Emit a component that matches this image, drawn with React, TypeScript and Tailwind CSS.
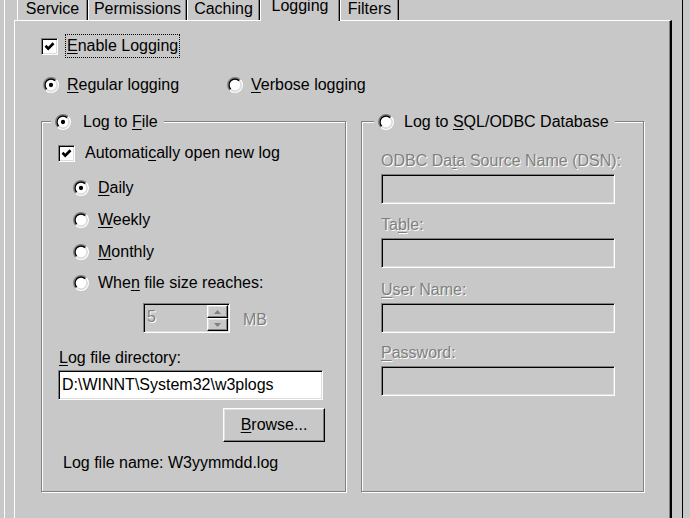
import React from "react";

const sunken =
  "border border-t-[#808080] border-l-[#808080] border-b-white border-r-white shadow-[inset_1px_1px_0_#000,inset_-1px_-1px_0_#dcdcdc]";
const raised =
  "border border-t-white border-l-white border-b-black border-r-black shadow-[inset_-1px_-1px_0_#808080,inset_1px_1px_0_#dfdfdf]";
const etched = "border border-[#808080] shadow-[inset_1px_1px_0_#fff,1px_1px_0_#fff]";
const dimText = "text-[#808080] [text-shadow:1px_1px_0_#fff]";

function Check() {
  return (
    <div className={`w-[17px] h-[17px] bg-white flex items-center justify-center shrink-0 ${sunken}`}>
      <svg width="11" height="11" viewBox="0 0 11 11">
        <path d="M1.5 4.8 L4.2 7.6 L9.5 2.2" fill="none" stroke="#000" strokeWidth="2.7" />
      </svg>
    </div>
  );
}

function Radio({ on }: { on?: boolean }) {
  const c = 6;
  const arc = (r: number, a: boolean) => {
    const k = r * 0.7071;
    return a
      ? `M${c - k} ${c + k} A${r} ${r} 0 0 1 ${c + k} ${c - k}`
      : `M${c + k} ${c - k} A${r} ${r} 0 0 1 ${c - k} ${c + k}`;
  };
  return (
    <svg width="16" height="16" viewBox="0 0 12 12" className="shrink-0">
      <circle cx="6" cy="6" r="4.5" fill="#fff" />
      <path d={arc(5.5, true)} fill="none" stroke="#808080" strokeWidth="1" />
      <path d={arc(5.5, false)} fill="none" stroke="#fff" strokeWidth="1" />
      <path d={arc(4.5, true)} fill="none" stroke="#000" strokeWidth="1" />
      <path d={arc(4.5, false)} fill="none" stroke="#dcdcdc" strokeWidth="1" />
      {on && <circle cx="6" cy="6" r="1.6" fill="#000" />}
    </svg>
  );
}

function U({ children }: { children: React.ReactNode }) {
  return <span className="underline underline-offset-2 decoration-1">{children}</span>;
}

function Tab({ label, w, active }: { label: string; w: string; active?: boolean }) {
  return (
    <div
      className={`${w} flex justify-center border-l border-l-white border-r border-r-black shadow-[inset_-1px_0_0_#808080] bg-[#c8c8c8] ${
        active ? "h-[21px] -mb-[1px] relative z-10" : "h-[20px]"
      }`}
    >
      <div className={active ? "-mt-[3px]" : ""}>{label}</div>
    </div>
  );
}

function Field({ label, mt }: { label: React.ReactNode; mt: string }) {
  return (
    <>
      <div className={`${mt} pl-[19px] h-[18px] ${dimText}`}>{label}</div>
      <div className={`mt-[4px] ml-[19px] w-[234px] h-[30px] bg-[#c8c8c8] ${sunken}`} />
    </>
  );
}

export default function App() {
  return (
    <div
      className="w-[690px] h-[518px] overflow-hidden bg-[#c8c8c8] text-black text-[16px] leading-[18px]"
      style={{ fontFamily: '"Liberation Sans", Arial, sans-serif' }}
    >
      <div className="ml-[4px] w-[679px] h-[518px] border-l border-l-white border-r border-r-black pl-[9px]">
        {/* tab strip */}
        <div className="flex items-end h-[20px] pl-[3px]">
          <Tab label="Service" w="w-[71px]" />
          <Tab label="Permissions" w="w-[99px]" />
          <Tab label="Caching" w="w-[73px]" />
          <Tab label="Logging" w="w-[80px]" active />
          <Tab label="Filters" w="w-[59px]" />
        </div>

        {/* page */}
        <div className="w-[658px] h-[520px] border-t border-t-white border-l border-l-white border-r-2 border-r-black shadow-[inset_-1px_0_0_#808080] flex flex-col">
          <div className="mt-[13px] pl-[26px] h-[24px] flex items-center">
            <Check />
            <div className="ml-[7px] px-[1px] h-[24px] flex items-center border border-dotted border-black">
              <U>E</U>nable Logging
            </div>
          </div>

          <div className="mt-[18px] pl-[28px] h-[18px] flex items-center">
            <Radio on />
            <div className="ml-[8px] w-[160px]">
              <U>R</U>egular logging
            </div>
            <Radio />
            <div className="ml-[8px]">
              <U>V</U>erbose logging
            </div>
          </div>

          <div className="mt-[27px] pl-[26px] flex">
            {/* log to file */}
            <div className={`w-[305px] h-[371px] flex flex-col ${etched}`}>
              <div className="-mt-[10px] ml-[9px] pl-[4px] pr-[6px] h-[20px] self-start bg-[#c8c8c8] flex items-center">
                <Radio on />
                <div className="ml-[12px]">
                  Log to <U>F</U>ile
                </div>
              </div>

              <div className="mt-[12px] pl-[16px] h-[18px] flex items-center">
                <Check />
                <div className="ml-[10px]">
                  Automati<U>c</U>ally open new log
                </div>
              </div>

              <div className="mt-[17px] pl-[31px] h-[18px] flex items-center">
                <Radio on />
                <div className="ml-[9px]">
                  <U>D</U>aily
                </div>
              </div>
              <div className="mt-[14px] pl-[31px] h-[18px] flex items-center">
                <Radio />
                <div className="ml-[9px]">
                  <U>W</U>eekly
                </div>
              </div>
              <div className="mt-[14px] pl-[31px] h-[18px] flex items-center">
                <Radio />
                <div className="ml-[9px]">
                  <U>M</U>onthly
                </div>
              </div>
              <div className="mt-[13px] pl-[31px] h-[18px] flex items-center">
                <Radio />
                <div className="ml-[9px]">
                  Whe<U>n</U> file size reaches:
                </div>
              </div>

              <div className="mt-[11px] pl-[101px] flex items-center">
                <div className={`w-[87px] h-[30px] flex items-stretch ${sunken}`}>
                  <div className={`flex-1 pl-[3px] pt-[4px] ${dimText}`}>5</div>
                  <div className="w-[22px] flex flex-col py-[1px] pr-[1px]">
                    <div className={`flex-1 flex items-center justify-center ${raised}`}>
                      <svg width="7" height="4" viewBox="0 0 7 4">
                        <path d="M3.5 0 L7 4 L0 4 Z" fill="#808080" />
                      </svg>
                    </div>
                    <div className={`flex-1 flex items-center justify-center ${raised}`}>
                      <svg width="7" height="4" viewBox="0 0 7 4">
                        <path d="M0 0 L7 0 L3.5 4 Z" fill="#808080" />
                      </svg>
                    </div>
                  </div>
                </div>
                <div className={`ml-[13px] mt-[3px] ${dimText}`}>MB</div>
              </div>

              <div className="mt-[16px] pl-[17px] h-[18px]">
                <U>L</U>og file directory:
              </div>
              <div className={`mt-[3px] ml-[16px] w-[265px] h-[30px] bg-white pl-[3px] flex items-center ${sunken}`}>
                D:\WINNT\System32\w3plogs
              </div>

              <div className={`mt-[8px] ml-[181px] w-[102px] h-[34px] flex items-center justify-center ${raised}`}>
                <span>
                  <U>B</U>rowse...
                </span>
              </div>

              <div className="mt-[12px] pl-[21px] h-[18px]">Log file name: W3yymmdd.log</div>
            </div>

            {/* log to database */}
            <div className={`ml-[15px] w-[283px] h-[371px] flex flex-col ${etched}`}>
              <div className="-mt-[10px] ml-[12px] pl-[4px] pr-[6px] h-[20px] self-start bg-[#c8c8c8] flex items-center">
                <Radio />
                <div className="ml-[10px]">
                  Log to <U>S</U>QL/ODBC Database
                </div>
              </div>

              <Field
                mt="mt-[20px]"
                label={
                  <>
                    ODBC Da<U>t</U>a Source Name (DSN):
                  </>
                }
              />
              <Field
                mt="mt-[12px]"
                label={
                  <>
                    Ta<U>b</U>le:
                  </>
                }
              />
              <Field
                mt="mt-[13px]"
                label={
                  <>
                    <U>U</U>ser Name:
                  </>
                }
              />
              <Field
                mt="mt-[11px]"
                label={
                  <>
                    <U>P</U>assword:
                  </>
                }
              />
            </div>
          </div>
        </div>
      </div>
    </div>
  );
}
